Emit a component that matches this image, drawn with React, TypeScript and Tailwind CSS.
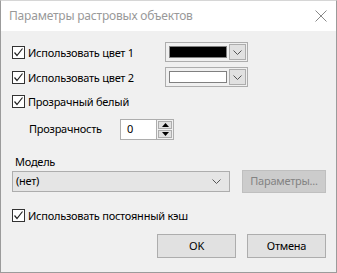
import React from "react";

const font = { fontFamily: '"Noto Sans", "Open Sans", sans-serif' };

function Check({ label }: { label: string }) {
  return (
    <div className="flex items-center h-[14px]">
      <div className="w-[13px] h-[13px] border border-[#333] bg-white flex items-center justify-center">
        <svg width="11" height="11" viewBox="0 0 11 11">
          <path d="M1.5 5.5 L4 8.5 L9.5 1.5" fill="none" stroke="#222" strokeWidth="1.2" />
        </svg>
      </div>
      <span className="ml-[3px] text-black leading-none">{label}</span>
    </div>
  );
}

function Chevron({ color = "#555" }: { color?: string }) {
  return (
    <svg width="9" height="5" viewBox="0 0 9 5">
      <path d="M0.5 0.5 L4.5 4.5 L8.5 0.5" fill="none" stroke={color} strokeWidth="1" />
    </svg>
  );
}

function ColorCombo({ fill }: { fill: string }) {
  return (
    <div className="w-[83px] h-[20px] border border-[#adadad] flex items-center pl-[3px] pr-[1px] gap-[2px]">
      <div className={`w-[58px] h-[12px] border border-[#808080] ${fill}`} />
      <div className="w-[17px] h-[16px] bg-[#e1e1e1] border border-[#adadad] flex items-center justify-center">
        <Chevron />
      </div>
    </div>
  );
}

export default function App() {
  return (
    <div style={font} className="w-[337px] h-[273px] border border-[#9b9b9b] border-t-[#d6d6d6] bg-[#f0f0f0] flex flex-col">
      {/* Title */}
      <div className="h-[30px] bg-white flex items-center justify-between pl-[8px] pr-[8px]">
        <span className="text-[12px] tracking-[-0.2px] text-[#999]">Параметры растровых объектов</span>
        <svg width="12" height="12" viewBox="0 0 12 12" className="mr-[1px]">
          <path d="M0.5 0.5 L11.5 11.5 M11.5 0.5 L0.5 11.5" stroke="#888" strokeWidth="1" />
        </svg>
      </div>

      <div className="flex flex-col pl-[11px] pr-[10px] text-[11px] tracking-[-0.25px]">
        <div className="flex items-center justify-between mt-[11px] w-[236px]">
          <Check label="Использовать цвет 1" />
          <ColorCombo fill="bg-black" />
        </div>
        <div className="flex items-center justify-between mt-[5px] w-[236px]">
          <Check label="Использовать цвет 2" />
          <ColorCombo fill="bg-white" />
        </div>
        <div className="mt-[7px]">
          <Check label="Прозрачный белый" />
        </div>

        <div className="flex items-center mt-[11px] pl-[17px]">
          <span className="w-[91px]">Прозрачность</span>
          <div className="w-[37px] h-[21px] border border-[#adadad] bg-white flex items-center pl-[6px]">0</div>
          <div className="w-[17px] h-[21px] border border-[#adadad] border-l-0 flex flex-col p-[1px] gap-[1px]">
            <div className="flex-1 border border-[#adadad] bg-[#e1e1e1] flex items-center justify-center">
              <svg width="7" height="4" viewBox="0 0 7 4"><path d="M0 4 L3.5 0 L7 4 Z" fill="#000" /></svg>
            </div>
            <div className="flex-1 border border-[#adadad] bg-[#e1e1e1] flex items-center justify-center">
              <svg width="7" height="4" viewBox="0 0 7 4"><path d="M0 0 L7 0 L3.5 4 Z" fill="#000" /></svg>
            </div>
          </div>
        </div>

        <span className="mt-[16px] ml-[3px] leading-none">Модель</span>
        <div className="flex items-center justify-between mt-[3px]">
          <div className="w-[218px] h-[21px] border border-[#adadad] bg-[#e5e5e5] flex items-center justify-between pl-[3px] pr-[8px]">
            <span>(нет)</span>
            <Chevron />
          </div>
          <div className="w-[84px] h-[23px] border border-[#bfbfbf] bg-[#cccccc] flex items-center justify-center text-[#838383]">
            Параметры...
          </div>
        </div>

        <div className="mt-[15px]">
          <Check label="Использовать постоянный кэш" />
        </div>

        <div className="flex justify-end gap-[11px] mt-[12px]">
          <div className="w-[79px] h-[24px] border border-[#adadad] bg-[#e1e1e1] flex items-center justify-center">OK</div>
          <div className="w-[79px] h-[24px] border border-[#adadad] bg-[#e1e1e1] flex items-center justify-center">Отмена</div>
        </div>
      </div>
    </div>
  );
}
